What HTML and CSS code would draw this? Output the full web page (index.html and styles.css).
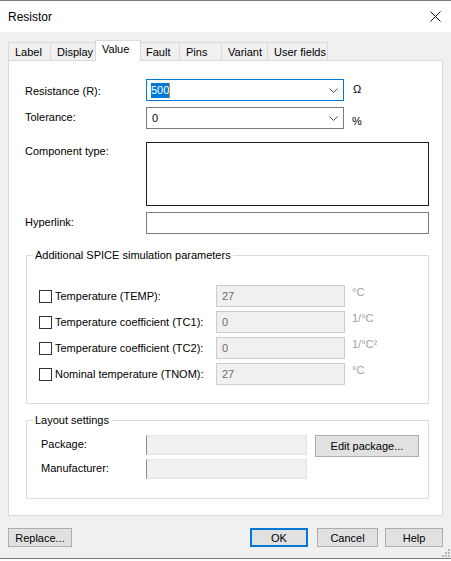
FILE: index.html
```html
<!DOCTYPE html>
<html>
<head>
<meta charset="utf-8">
<link rel="stylesheet" href="styles.css">
</head>
<body>
<div class="window">
  <div class="titlebar">
    <span class="title">Resistor</span>
    <svg class="close" width="11" height="11" viewBox="0 0 11 11"><path d="M0.5 0.5 L10.5 10.5 M10.5 0.5 L0.5 10.5" stroke="#111" stroke-width="1" fill="none"/></svg>
  </div>
  <div class="body">
    <div class="tabs">
      <div class="tab t-label">Label</div>
      <div class="tab t-display">Display</div>
      <div class="tab active t-value">Value</div>
      <div class="tab t-fault">Fault</div>
      <div class="tab t-pins">Pins</div>
      <div class="tab t-variant">Variant</div>
      <div class="tab t-user">User fields</div>
    </div>
    <div class="panel">
      <div class="row r-res">
        <label class="lbl">Resistance (R):</label>
        <div class="combo focused"><span class="sel">500</span><span class="caret"></span>
          <svg class="chev" width="9" height="5" viewBox="0 0 9 5"><path d="M0.5 0.5 L4.5 4.5 L8.5 0.5" stroke="#555" fill="none"/></svg>
        </div>
        <span class="unit">Ω</span>
      </div>
      <div class="row r-tol">
        <label class="lbl">Tolerance:</label>
        <div class="combo"><span class="val">0</span>
          <svg class="chev" width="9" height="5" viewBox="0 0 9 5"><path d="M0.5 0.5 L4.5 4.5 L8.5 0.5" stroke="#555" fill="none"/></svg>
        </div>
        <span class="unit pct">%</span>
      </div>
      <div class="row r-ctype">
        <label class="lbl">Component type:</label>
        <div class="textarea"></div>
      </div>
      <div class="row r-link">
        <label class="lbl">Hyperlink:</label>
        <div class="textbox"></div>
      </div>

      <fieldset class="group spice">
        <legend>Additional SPICE simulation parameters</legend>
        <div class="srow">
          <span class="check"></span><span class="slbl">Temperature (TEMP):</span>
          <div class="dis">27</div><span class="sunit">°C</span>
        </div>
        <div class="srow">
          <span class="check"></span><span class="slbl">Temperature coefficient (TC1):</span>
          <div class="dis">0</div><span class="sunit">1/°C</span>
        </div>
        <div class="srow">
          <span class="check"></span><span class="slbl">Temperature coefficient (TC2):</span>
          <div class="dis">0</div><span class="sunit">1/°C²</span>
        </div>
        <div class="srow">
          <span class="check"></span><span class="slbl">Nominal temperature (TNOM):</span>
          <div class="dis">27</div><span class="sunit">°C</span>
        </div>
      </fieldset>

      <fieldset class="group layout">
        <legend>Layout settings</legend>
        <div class="lrow">
          <span class="llbl">Package:</span>
          <div class="ro"></div>
          <button class="btn edit">Edit package...</button>
        </div>
        <div class="lrow r-manu">
          <span class="llbl">Manufacturer:</span>
          <div class="ro"></div>
        </div>
      </fieldset>
    </div>
    <div class="footer">
      <button class="btn replace">Replace...</button>
      <span class="spacer"></span>
      <button class="btn ok">OK</button>
      <button class="btn cancel">Cancel</button>
      <button class="btn help">Help</button>
    </div>
    <svg class="grip" width="9" height="9" viewBox="0 0 9 9" fill="#b8b8b8">
      <rect x="7" y="1" width="2" height="2"/>
      <rect x="4" y="4" width="2" height="2"/><rect x="7" y="4" width="2" height="2"/>
      <rect x="1" y="7" width="2" height="2"/><rect x="4" y="7" width="2" height="2"/><rect x="7" y="7" width="2" height="2"/>
    </svg>
  </div>
</div>
</body>
</html>
```
FILE: styles.css
```css
* { box-sizing: border-box; }
html, body { margin: 0; padding: 0; background: #ffffff; }
body { font-family: "Liberation Sans", Arial, sans-serif; font-size: 11px; color: #000; }

.window { width: 451px; border-top: 1px solid #7a7a7a; border-bottom: 1px solid #7a7a7a; }

.titlebar { height: 31px; background: #fff; display: flex; align-items: center; justify-content: space-between; padding: 0 10px 0 8px; }
.title { font-size: 12px; color: #000; }
.close { display: block; }

.body { position: relative; background: #f0f0f0; padding: 8px 8px 11px 8px; }

.tabs { display: flex; align-items: flex-end; height: 20px; position: relative; z-index: 2; }
.tab { height: 18px; border: 1px solid #d9d9d9; border-bottom: none; margin-left: -1px; background: #f0f0f0; padding: 2px 0 0 6px; line-height: 14px; }
.tab:first-child { margin-left: 0; }
.tab.active { height: 21px; background: #fff; margin-bottom: -1px; margin-left: -2px; margin-right: -1px; padding-top: 1px; position: relative; z-index: 3; }
.t-label { width: 43px; }
.t-display { width: 47px; }
.t-value { width: 46px; }
.t-fault { width: 41px; }
.t-pins { width: 43px; }
.t-variant { width: 47px; }
.t-user { width: 61px; }

.panel { height: 456px; background: #fff; border: 1px solid #d9d9d9; padding: 18px 0 0 16px; position: relative; z-index: 1; }

.row { display: flex; align-items: center; }
.lbl { width: 121px; flex: 0 0 121px; }
.combo { width: 198px; height: 22px; border: 1px solid #7a7a7a; background: #fff; position: relative; display: flex; align-items: center; padding-left: 4px; }
.combo.focused { border-color: #0078d7; }
.sel { background: #0078d7; color: #fff; line-height: 15px; }
.caret { width: 1px; height: 15px; background: #d9822b; }
.val { padding-left: 1px; }
.chev { position: absolute; right: 5px; top: 8px; }
.unit { margin-left: 9px; margin-top: -3px; }
.unit.pct { margin-left: 8px; margin-top: 5px; }
.r-res .lbl { padding-top: 2px; }
.r-tol { margin-top: 6px; }
.r-tol .lbl { margin-top: -2px; }
.r-ctype { margin-top: 13px; align-items: flex-start; }
.r-ctype .lbl { padding-top: 3px; }
.textarea { width: 283px; height: 64px; border: 1px solid #1e1e1e; background: #fff; }
.r-link { margin-top: 6px; }
.r-link .lbl { margin-top: -2px; }
.textbox { width: 283px; height: 22px; border: 1px solid #7a7a7a; background: #fff; }

.group { width: 403px; margin: 0 0 0 1px; padding: 0; border: 1px solid #dcdcdc; }
.group legend { padding: 0 2px; line-height: 14px; }
.spice { margin-top: 14px; padding: 23px 0 18px 12px; }
.spice legend { margin-left: -6px; }
.srow { display: flex; align-items: center; height: 22px; margin-bottom: 4px; }
.srow:last-child { margin-bottom: 0; }
.check { width: 13px; height: 13px; border: 1px solid #333; background: #fff; flex: 0 0 13px; }
.slbl { margin-left: 3px; width: 161px; flex: 0 0 161px; }
.dis { width: 129px; height: 22px; border: 1px solid #cccccc; background: #f0f0f0; color: #6d6d6d; padding-left: 5px; display: flex; align-items: center; }
.sunit { align-self: flex-start; margin-left: 7px; color: #a0a0a0; line-height: 12px; margin-top: 1px; }

.layout { margin-top: 9px; padding: 8px 0 19px 14px; }
.layout legend { margin-left: -8px; }
.lrow { display: flex; align-items: flex-start; }
.llbl { width: 105px; flex: 0 0 105px; padding-top: 3px; }
.ro { width: 161px; height: 20px; background: #f0f0f0; border: 1px solid #e3e3e3; border-left-color: #8a8a8a; }
.r-manu { margin-top: 2px; }

.btn { font-family: "Liberation Sans", Arial, sans-serif; font-size: 11px; color: #000; background: #e1e1e1; border: 1px solid #adadad; padding: 0; margin: 0; }
.edit { width: 104px; height: 22px; margin-left: 8px; }

.footer { display: flex; margin-top: 12px; height: 19px; }
.footer .btn { height: 19px; }
.spacer { flex: 1; }
.replace { width: 64px; }
.ok { width: 58px; border: 2px solid #0078d7; }
.cancel { width: 61px; margin-left: 9px; }
.help { width: 58px; margin-left: 7px; }

.grip { position: absolute; right: 1px; bottom: 1px; }
```
